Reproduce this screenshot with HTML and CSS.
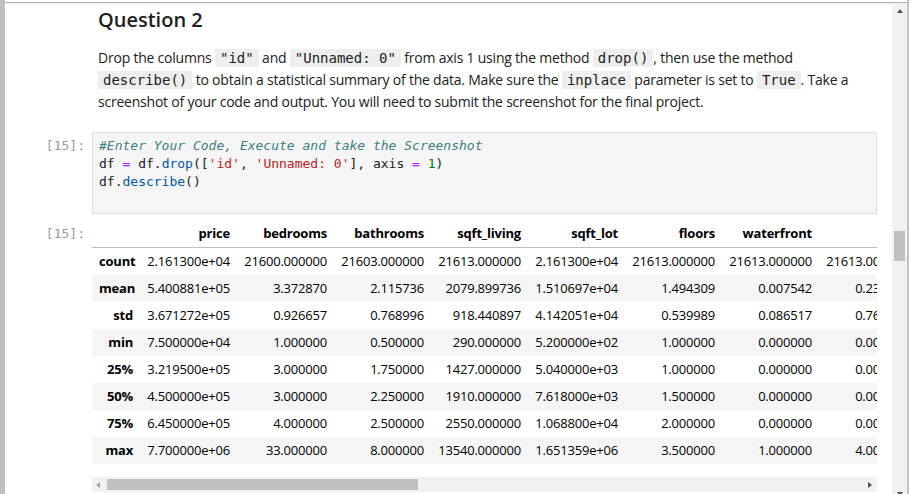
FILE: index.html
```html
<!DOCTYPE html>
<html lang="en">
<head>
<meta charset="utf-8">
<title>Question 2</title>
<link rel="stylesheet" href="styles.css">
</head>
<body>
<div class="screen">
  <div class="rail"></div>
  <div class="window">
    <div class="topline"></div>
    <div class="body-row">
      <div class="notebook">
        <div class="cell md-cell">
          <div class="prompt"></div>
          <div class="md-content">
            <h2>Question 2</h2>
            <p>Drop the columns <code>"id"</code> and <code>"Unnamed: 0"</code> from axis 1 using the method <code>drop()</code>, then use the method <code>describe()</code> to obtain a statistical summary of the data. Make sure the <code>inplace</code> parameter is set to <code>True</code>. Take a screenshot of your code and output. You will need to submit the screenshot for the final project.</p>
          </div>
        </div>

        <div class="cell code-cell">
          <div class="prompt">[15]:</div>
          <pre class="editor"><span class="c">#Enter Your Code, Execute and take the Screenshot</span>
df <span class="o">=</span> df.<span class="p">drop</span>([<span class="s">'id'</span>, <span class="s">'Unnamed: 0'</span>], axis <span class="o">=</span> <span class="n">1</span>)
df.<span class="p">describe</span>()
</pre>
        </div>

        <div class="cell out-cell">
          <div class="prompt out-prompt">[15]:</div>
          <div class="out-area">
            <div class="table-wrap">
              <table class="df">
                <colgroup>
                  <col class="c-idx"><col class="c-val"><col class="c-val"><col class="c-val"><col class="c-val"><col class="c-val"><col class="c-val"><col class="c-val"><col class="c-val">
                </colgroup>
                <thead>
                  <tr><th></th><th>price</th><th>bedrooms</th><th>bathrooms</th><th>sqft_living</th><th>sqft_lot</th><th>floors</th><th>waterfront</th><th>view</th></tr>
                </thead>
                <tbody>
                  <tr><th>count</th><td>2.161300e+04</td><td>21600.000000</td><td>21603.000000</td><td>21613.000000</td><td>2.161300e+04</td><td>21613.000000</td><td>21613.000000</td><td>21613.000000</td></tr>
                  <tr><th>mean</th><td>5.400881e+05</td><td>3.372870</td><td>2.115736</td><td>2079.899736</td><td>1.510697e+04</td><td>1.494309</td><td>0.007542</td><td>0.234303</td></tr>
                  <tr><th>std</th><td>3.671272e+05</td><td>0.926657</td><td>0.768996</td><td>918.440897</td><td>4.142051e+04</td><td>0.539989</td><td>0.086517</td><td>0.766318</td></tr>
                  <tr><th>min</th><td>7.500000e+04</td><td>1.000000</td><td>0.500000</td><td>290.000000</td><td>5.200000e+02</td><td>1.000000</td><td>0.000000</td><td>0.000000</td></tr>
                  <tr><th>25%</th><td>3.219500e+05</td><td>3.000000</td><td>1.750000</td><td>1427.000000</td><td>5.040000e+03</td><td>1.000000</td><td>0.000000</td><td>0.000000</td></tr>
                  <tr><th>50%</th><td>4.500000e+05</td><td>3.000000</td><td>2.250000</td><td>1910.000000</td><td>7.618000e+03</td><td>1.500000</td><td>0.000000</td><td>0.000000</td></tr>
                  <tr><th>75%</th><td>6.450000e+05</td><td>4.000000</td><td>2.500000</td><td>2550.000000</td><td>1.068800e+04</td><td>2.000000</td><td>0.000000</td><td>0.000000</td></tr>
                  <tr><th>max</th><td>7.700000e+06</td><td>33.000000</td><td>8.000000</td><td>13540.000000</td><td>1.651359e+06</td><td>3.500000</td><td>1.000000</td><td>4.000000</td></tr>
                </tbody>
              </table>
            </div>
            <div class="hscroll">
              <span class="arr-left"></span>
              <span class="hthumb"></span>
              <span class="hspacer"></span>
              <span class="arr-right"></span>
            </div>
          </div>
        </div>
      </div>
      <div class="vscroll">
        <span class="arr-up"></span>
        <span class="vthumb"></span>
        <span class="vspacer"></span>
        <span class="arr-down"></span>
      </div>
    </div>
  </div>
  <div class="rborder"></div>
</div>
</body>
</html>
```

FILE: styles.css
```css
html, body {
  margin: 0;
  padding: 0;
  background: #ffffff;
}

body {
  width: 909px;
  height: 494px;
  overflow: hidden;
  font-family: "Open Sans", "Noto Sans", sans-serif;
  color: #212121;
}

.screen {
  display: flex;
  width: 909px;
  height: 494px;
  overflow: hidden;
}

.rail {
  width: 5px;
  flex: none;
  background: #bfbfbf;
}

.rborder {
  width: 2px;
  flex: none;
  background: #c2c2c2;
}

.window {
  flex: 1;
  display: flex;
  flex-direction: column;
  min-width: 0;
}

.topline {
  margin-top: 2px;
  height: 1px;
  flex: none;
  background: #b3b3b3;
  box-shadow: 0 1px 1px #e4e4e4;
}

.body-row {
  flex: 1;
  display: flex;
  min-height: 0;
}

.notebook {
  flex: 1;
  min-width: 0;
  padding-right: 15px;
  display: flex;
  flex-direction: column;
}

.cell {
  display: flex;
}

.prompt {
  width: 87px;
  flex: none;
  box-sizing: border-box;
  padding-right: 7px;
  text-align: right;
  font-family: "DejaVu Sans Mono", monospace;
  font-size: 13px;
  color: #9a9a9a;
}

/* markdown cell */
.md-cell {
  padding-top: 3px;
}

.md-content {
  flex: 1;
  min-width: 0;
  padding-left: 6px;
}

.md-content h2 {
  margin: 0;
  font-size: 20px;
  line-height: 28px;
  font-weight: 600;
  color: #212121;
}

.md-content p {
  margin: 13px 0 0;
  font-size: 14px;
  line-height: 22px;
  letter-spacing: -0.22px;
  color: #212121;
}

.md-content code {
  font-family: "DejaVu Sans Mono", monospace;
  font-size: 14px;
  letter-spacing: 0;
  background: #eeeeee;
  padding: 1px 5px;
}

/* code cell */
.code-cell {
  margin-top: 19px;
}

.code-cell .prompt {
  padding-top: 5px;
  line-height: 18px;
}

.editor {
  flex: 1;
  min-width: 0;
  margin: 0;
  box-sizing: border-box;
  border: 1px solid #e0e0e0;
  background: #f5f5f5;
  padding: 4px 6px;
  font-family: "DejaVu Sans Mono", monospace;
  font-size: 13px;
  line-height: 18px;
  height: 82px;
  color: #212121;
}

.editor .c { color: #408080; font-style: italic; }
.editor .o { color: #aa22ff; }
.editor .p { color: #0055aa; }
.editor .s { color: #ba2121; }
.editor .n { color: #008000; }

/* output cell */
.out-cell {
  margin-top: 6px;
}

.out-prompt {
  line-height: 27px;
}

.out-area {
  flex: 1;
  min-width: 0;
}

.table-wrap {
  overflow: hidden;
}

.df {
  table-layout: fixed;
  width: 824px;
  border-collapse: separate;
  border-spacing: 0;
  font-size: 13px;
  letter-spacing: -0.2px;
  color: #000000;
}

.df .c-idx { width: 48px; }
.df .c-val { width: 97px; }

.df th,
.df td {
  padding: 0 7px;
  text-align: right;
  line-height: 27px;
  white-space: nowrap;
  overflow: hidden;
}

.df th {
  font-weight: 700;
}

.df td {
  font-weight: 400;
}

.df thead th {
  border-bottom: 1px solid #bdbdbd;
}

.df tbody tr:nth-child(even) {
  background: #f5f5f5;
}

/* horizontal scrollbar */
.hscroll {
  margin-top: 13px;
  height: 15px;
  background: #f1f1f1;
  display: flex;
  align-items: center;
}

.arr-left {
  margin-left: 4px;
  width: 0;
  height: 0;
  border-top: 3.5px solid transparent;
  border-bottom: 3.5px solid transparent;
  border-right: 4px solid #a3a3a3;
}

.hthumb {
  margin-left: 7px;
  width: 311px;
  height: 11px;
  background: #c1c1c1;
}

.hspacer {
  flex: 1;
}

.arr-right {
  margin-right: 5px;
  width: 0;
  height: 0;
  border-top: 3.5px solid transparent;
  border-bottom: 3.5px solid transparent;
  border-left: 4px solid #505050;
}

/* vertical scrollbar */
.vscroll {
  width: 15px;
  flex: none;
  background: #f1f1f1;
  display: flex;
  flex-direction: column;
  align-items: center;
  overflow: hidden;
}

.arr-up {
  margin-top: 6px;
  width: 0;
  height: 0;
  border-left: 3.5px solid transparent;
  border-right: 3.5px solid transparent;
  border-bottom: 4px solid #505050;
}

.vthumb {
  margin-top: 218px;
  width: 11px;
  height: 30px;
  background: #c1c1c1;
}

.vspacer {
  flex: 1;
}

.arr-down {
  margin-bottom: -2px;
  width: 0;
  height: 0;
  flex: none;
  border-left: 3.5px solid transparent;
  border-right: 3.5px solid transparent;
  border-top: 4px solid #505050;
}
```
